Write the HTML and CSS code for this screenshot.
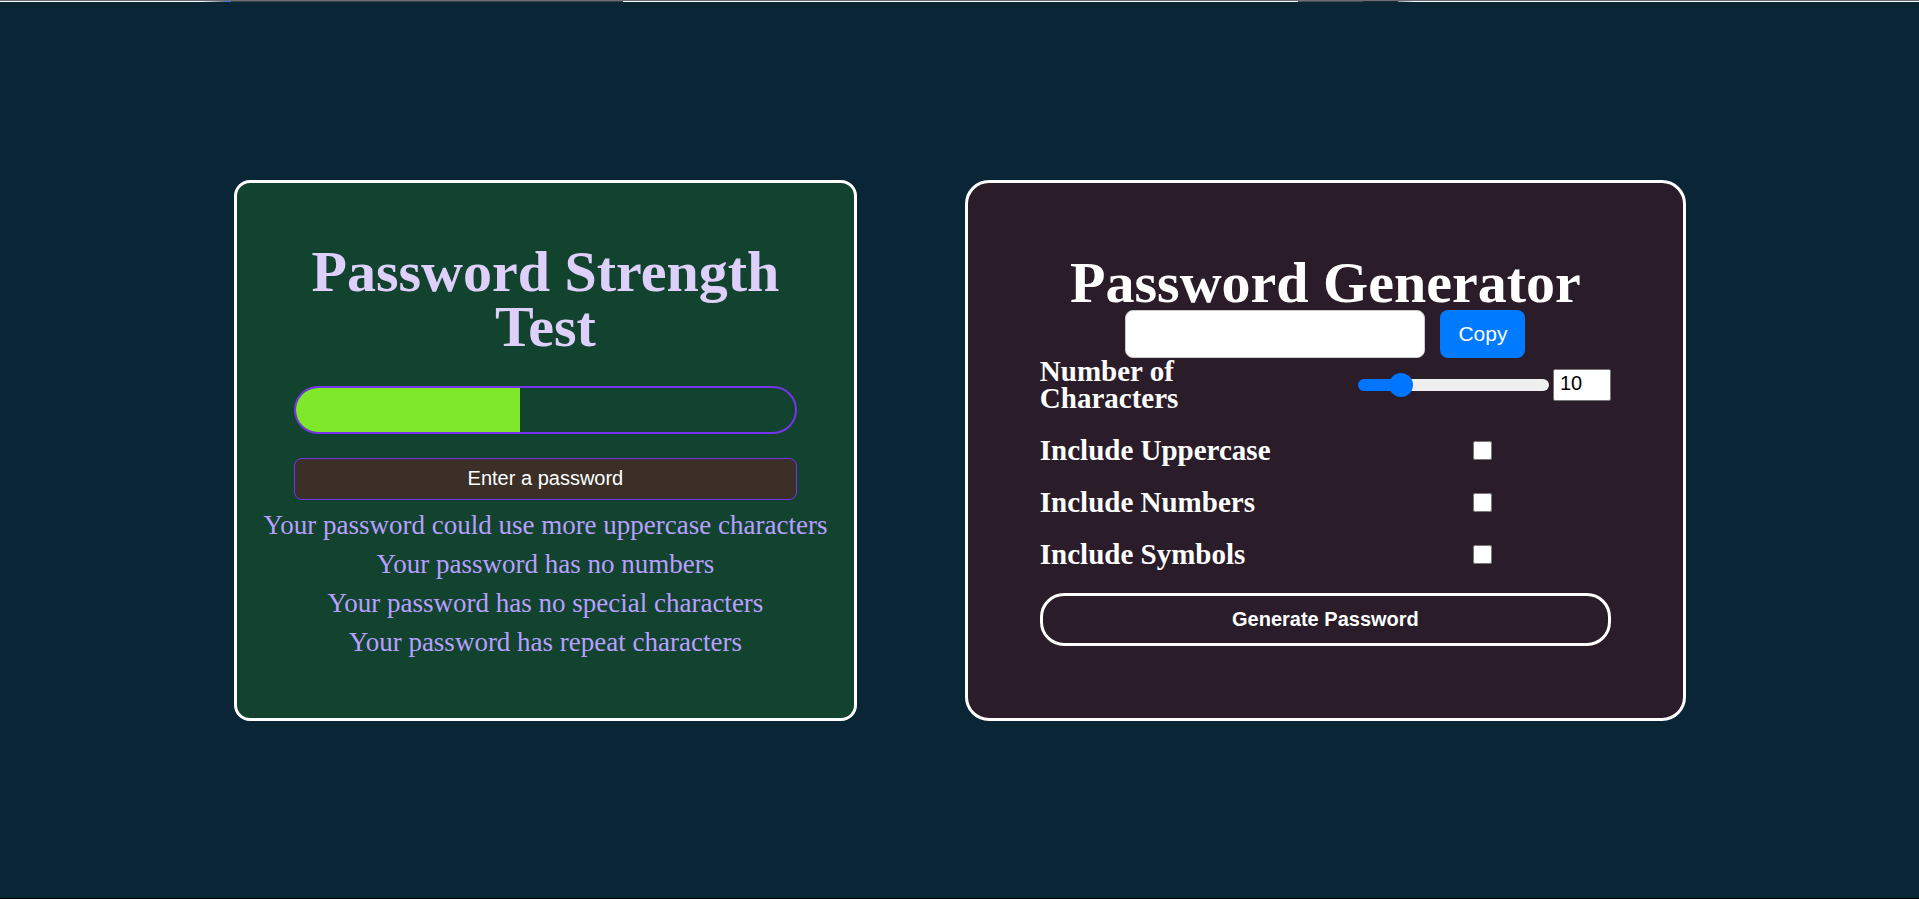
FILE: index.html
```html
<!DOCTYPE html>
<html lang="en">
<head>
<meta charset="utf-8">
<title>Password Tools</title>
<link rel="stylesheet" href="styles.css">
</head>
<body>
<div class="top-edge"></div>
<main class="page">
  <section class="card strength">
    <h1 class="title">Password Strength Test</h1>
    <div class="meter"><div class="meter-fill" style="width:45%"></div></div>
    <input class="password" type="text" placeholder="Enter a password" aria-label="Enter a password">
    <div class="reasons">
      <div>Your password could use more uppercase characters</div>
      <div>Your password has no numbers</div>
      <div>Your password has no special characters</div>
      <div>Your password has repeat characters</div>
    </div>
  </section>
  <section class="card generator">
    <h1 class="title">Password Generator</h1>
    <div class="output">
      <input class="result" type="text" readonly aria-label="Generated password">
      <button class="copy" type="button">Copy</button>
    </div>
    <form class="options">
      <label class="count-label" for="amount">Number of Characters</label>
      <div class="count">
        <input class="slider" id="range" type="range" min="1" max="50" value="10" aria-label="Number of characters slider">
        <input class="number" id="amount" type="number" min="1" max="50" value="10">
      </div>
      <label for="upper">Include Uppercase</label>
      <input class="check" id="upper" type="checkbox">
      <label for="nums">Include Numbers</label>
      <input class="check" id="nums" type="checkbox">
      <label for="syms">Include Symbols</label>
      <input class="check" id="syms" type="checkbox">
      <button class="generate" type="button">Generate Password</button>
    </form>
  </section>
</main>
</body>
</html>
```
FILE: styles.css
```css
* { box-sizing: border-box; }
body {
  margin: 0;
  min-height: 100vh;
  display: flex;
  flex-direction: column;
  background: #0a2536;
  border-bottom: 1px solid #000;
  font-family: Georgia, "Liberation Serif", serif;
}
.top-edge {
  height: 2px;
  border-top: 1px solid #6c6e75;
  background: linear-gradient(to right,
    #fff 200px, #6c6e75 225px, #3b78e7 225px, #3b78e7 231px,
    #3d4043 231px, #3d4043 623px, #fff 623px, #fff 1298px,
    #4a4c50 1298px, #4a4c50 1363px, #1d2a33 1363px, #1d2a33 1398px,
    #8a93a0 1398px, #fff 1416px);
}
.page {
  flex: 1;
  display: grid;
  grid-template-columns: 19fr 22fr;
  align-content: center;
  gap: 108px;
  padding: 0 233px 0 234px;
}
.card {
  display: flex;
  flex-direction: column;
  justify-content: center;
  border: 3px solid #fff;
}
.title {
  margin: 0;
  font-size: 58px;
  line-height: 55px;
  text-align: center;
}
.strength {
  padding: 24px 57px;
  border-radius: 16px;
  background: #12432f;
}
.strength .title { color: #decffb; }
.meter {
  height: 48px;
  margin-top: 32px;
  border: 2px solid #7733ee;
  border-radius: 24px;
  overflow: hidden;
}
.meter-fill { height: 100%; background: #7fe82a; }
.password {
  height: 42px;
  margin-top: 24px;
  border: 1px solid #7733ee;
  border-radius: 8px;
  padding: 0 2px 2px;
  background: #3b2f27;
  color: #fff;
  font: 20px "Liberation Sans", Arial, sans-serif;
  text-align: center;
}
.password::placeholder { color: #fff; }
.reasons {
  display: grid;
  gap: 12px;
  margin: 12px -57px 0;
  color: #b99fff;
  font-size: 27px;
  line-height: 27px;
  text-align: center;
}
.generator {
  padding: 72px;
  border-radius: 24px;
  background: #2a1d29;
  color: #fff;
}
.output { display: flex; justify-content: center; gap: 15px; }
.result {
  width: 300px;
  height: 48px;
  border: 1px solid #ccc;
  border-radius: 8px;
  background: #fff;
}
.copy {
  width: 85px;
  border: 0;
  border-radius: 8px;
  background: #007bff;
  color: #fff;
  font: 21px "Liberation Sans", Arial, sans-serif;
}
.options {
  display: grid;
  grid-template-columns: 1fr 256px;
  gap: 25px 60px;
  align-items: center;
  font-size: 29px;
  line-height: 27px;
  font-weight: bold;
}
.count-label { width: 160px; }
.count { display: flex; align-items: center; justify-content: flex-end; gap: 4px; }
.slider {
  appearance: none;
  width: 191px;
  height: 24px;
  margin: 0;
  background: none;
}
.slider::-webkit-slider-runnable-track {
  height: 12px;
  border-radius: 6px;
  background: linear-gradient(to right, #0075ff 22%, #efefef 22%);
}
.slider::-webkit-slider-thumb {
  appearance: none;
  width: 24px;
  height: 24px;
  margin-top: -6px;
  border-radius: 50%;
  background: #0075ff;
}
.number {
  width: 58px;
  height: 32px;
  padding: 0 6px 2px;
  border: 1px solid #767676;
  border-radius: 2px;
  background: #fff;
  color: #000;
  font: 20px "Liberation Sans", Arial, sans-serif;
}
.check { width: 19px; height: 19px; margin: 0; justify-self: center; }
.generate {
  grid-column: 1 / -1;
  height: 53px;
  border: 3px solid #fff;
  border-radius: 24px;
  background: none;
  color: #fff;
  font: bold 20px "Liberation Sans", Arial, sans-serif;
}
```
